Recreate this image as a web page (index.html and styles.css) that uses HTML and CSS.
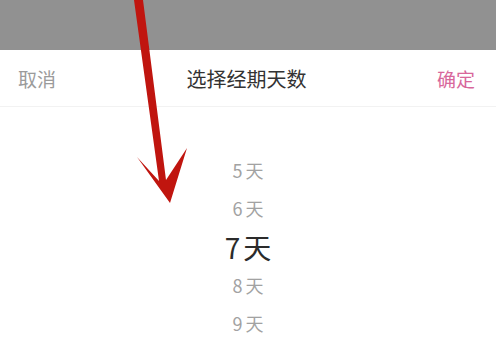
FILE: index.html
```html
<!DOCTYPE html>
<html lang="zh-CN">
<head>
    <meta charset="UTF-8">
    <meta name="viewport" content="width=device-width, initial-scale=1.0">
    <title>选择经期天数</title>
    <link rel="stylesheet" href="styles.css">
</head>
<body>
    <div class="mask"></div>
    <div class="sheet">
        <div class="sheet-header">
            <span class="btn-cancel">取消</span>
            <span class="sheet-title">选择经期天数</span>
            <span class="btn-ok">确定</span>
        </div>
        <div class="picker">
            <div class="picker-item">5天</div>
            <div class="picker-item">6天</div>
            <div class="picker-item active">7天</div>
            <div class="picker-item">8天</div>
            <div class="picker-item">9天</div>
        </div>
    </div>
    <!-- 标注箭头 -->
    <svg class="arrow" width="496" height="359" viewBox="0 0 496 359">
        <polygon points="134,0 143,0 166,180 187,148 170,203 137,157 159,181" fill="#c0150f"/>
    </svg>
</body>
</html>
```

FILE: styles.css
```css
body {
    margin: 0;
    padding: 0;
    font-family: "Noto Sans CJK SC", "Noto Sans", sans-serif;
    background: #fff;
    position: relative;
    height: 359px;
    overflow: hidden;
}

.mask {
    height: 50px;
    background: #919191;
}

.sheet {
    background: #fff;
}

.sheet-header {
    height: 56px;
    display: grid;
    grid-template-columns: 1fr auto 1fr;
    align-items: center;
    padding: 0 21px 0 18px;
    border-bottom: 1px solid #f2f2f2;
}

.btn-cancel {
    font-size: 19px;
    color: #9b9b9b;
}

.sheet-title {
    font-size: 20px;
    color: #333;
}

.btn-ok {
    font-size: 19px;
    color: #d8679b;
    text-align: right;
}

.picker {
    padding-top: 44px;
    display: flex;
    flex-direction: column;
    align-items: center;
}

.picker-item {
    height: 38.3px;
    line-height: 38.3px;
    font-size: 18px;
    color: #a2a2a2;
    letter-spacing: 3px;
    text-indent: 3px;
}

.picker-item.active {
    font-size: 28px;
    color: #2b2b2b;
    letter-spacing: 3px;
}

.arrow {
    position: absolute;
    left: 0;
    top: 0;
}
```
